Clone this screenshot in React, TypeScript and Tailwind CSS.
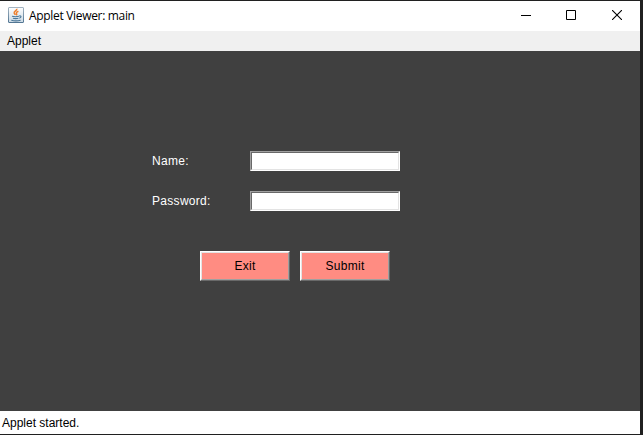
import React from "react";

function JavaIcon() {
  return (
    <svg width="16" height="16" viewBox="0 0 16 16" className="shrink-0">
      <defs>
        <linearGradient id="tile" x1="0" y1="0" x2="0" y2="1">
          <stop offset="0" stopColor="#ffffff" />
          <stop offset="1" stopColor="#cbd9e4" />
        </linearGradient>
        <linearGradient id="edge" x1="0" y1="0" x2="0" y2="1">
          <stop offset="0" stopColor="#a3b4c2" />
          <stop offset="1" stopColor="#527693" />
        </linearGradient>
      </defs>
      <rect x="0.5" y="0.5" width="15" height="15" rx="0.5" fill="url(#tile)" stroke="url(#edge)" />
      <path d="M8.8 1.8C9.3 3.6 5.6 4.3 6.2 6.1c.2.7.9 1.1 1 1.9M10.4 4.2C8.7 4.9 7.8 5.7 8.6 6.8c.4.6.2 1-.3 1.5" fill="none" stroke="#ee7f2d" strokeWidth="1.5" />
      <path d="M4 9.3c1.8.5 5 .5 7 0M4.9 11.3c1.6.4 4 .4 5.5 0M11.2 9c2.3-.6 2.5 1.5.1 2.3M3.3 13.3c2.4.6 7 .6 9.3-.1" fill="none" stroke="#4c7899" strokeWidth="1.1" />
    </svg>
  );
}

function TitleBar() {
  return (
    <header className="flex h-[30px] shrink-0 items-center bg-white pr-[18px] pb-0.5 pl-2 text-black">
      <JavaIcon />
      <h1 className="ml-[5px] flex-1 pt-0.5 font-['Open_Sans','Noto_Sans',sans-serif] text-[12px] leading-4 tracking-[-0.32px] whitespace-nowrap">
        Applet Viewer: main
      </h1>
      <button aria-label="Minimize" className="mr-[35px]">
        <svg width="10" height="10" viewBox="0 0 10 10" className="block" fill="none" stroke="currentColor">
          <path d="M0 5.5H10" />
        </svg>
      </button>
      <button aria-label="Maximize" className="mr-9">
        <svg width="10" height="10" viewBox="0 0 10 10" className="block" fill="none" stroke="currentColor">
          <path d="M0.5 0.5H9.5V9.5H0.5Z" />
        </svg>
      </button>
      <button aria-label="Close">
        <svg width="10" height="10" viewBox="0 0 10 10" className="block" fill="none" stroke="currentColor" strokeWidth="1.1">
          <path d="M0 0L10 10M10 0L0 10" />
        </svg>
      </button>
    </header>
  );
}

function Field({ label, type }: { label: string; type: string }) {
  return (
    <label className="flex h-5 items-center">
      <span className="w-[98px] text-white">{label}</span>
      <span className="h-5 w-[150px] border border-t-[#a0a0a0] border-r-white border-b-white border-l-[#a0a0a0]">
        <input type={type} className="block h-full w-full border border-t-[#696969] border-r-[#e3e3e3] border-b-[#e3e3e3] border-l-[#696969] bg-white outline-none" />
      </span>
    </label>
  );
}

function PushButton({ label }: { label: string }) {
  return (
    <button className="h-[30px] w-[90px] border border-t-white border-r-[#696969] border-b-[#696969] border-l-white">
      <span className="flex h-full w-full items-center justify-center border border-t-[#e3e3e3] border-r-[#a0a0a0] border-b-[#a0a0a0] border-l-[#e3e3e3] bg-[#ff8c82] text-black">
        {label}
      </span>
    </button>
  );
}

export default function App() {
  return (
    <div className="h-[435px] w-[643px] overflow-hidden bg-[#202020] pt-px pr-[3px] pb-px font-['Liberation_Sans',Arial,sans-serif] text-[12px] leading-4">
      <div className="flex h-full flex-col">
        <TitleBar />
        <nav className="flex h-5 shrink-0 items-center bg-[#f0f0f0] pl-[7px] text-black">Applet</nav>
        <main className="h-[360px] shrink-0 bg-[#404040] pt-[100px] pl-[152px] tracking-[0.3px]">
          <div className="flex flex-col gap-5">
            <Field label="Name:" type="text" />
            <Field label="Password:" type="password" />
          </div>
          <div className="mt-10 flex gap-2.5 pl-12">
            <PushButton label="Exit" />
            <PushButton label="Submit" />
          </div>
        </main>
        <footer className="flex flex-1 items-center bg-white pl-[2px] text-black">Applet started.</footer>
      </div>
    </div>
  );
}
